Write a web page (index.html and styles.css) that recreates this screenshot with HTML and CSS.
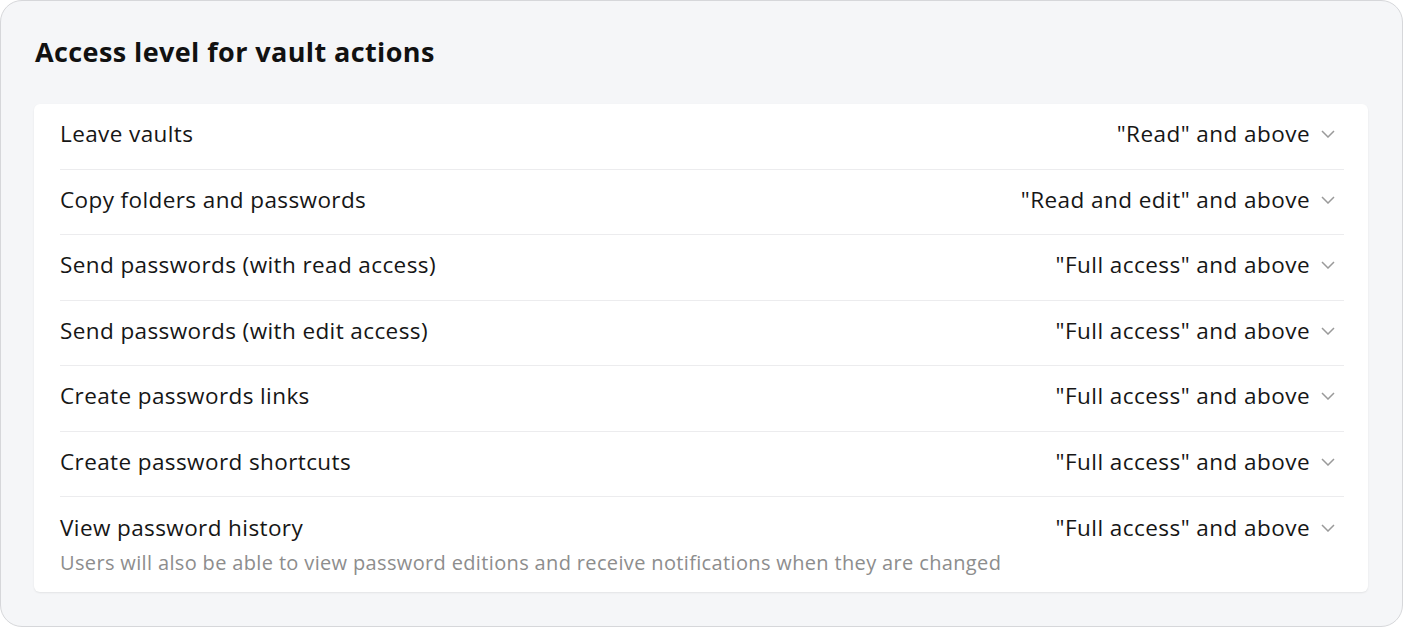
FILE: index.html
```html
<!DOCTYPE html>
<html>
<head>
<meta charset="utf-8">
<link rel="stylesheet" href="styles.css">
</head>
<body>
<div class="panel">
  <h2 class="title">Access level for vault actions</h2>
  <div class="card">
    <div class="row">
      <div class="label">Leave vaults</div>
      <div class="select">"Read" and above<svg class="chev" viewBox="0 0 14 8" width="14" height="8"><path d="M1 1l6 6 6-6" fill="none" stroke="#9a9a9a" stroke-width="1.5"/></svg></div>
    </div>
    <div class="row">
      <div class="label">Copy folders and passwords</div>
      <div class="select">"Read and edit" and above<svg class="chev" viewBox="0 0 14 8" width="14" height="8"><path d="M1 1l6 6 6-6" fill="none" stroke="#9a9a9a" stroke-width="1.5"/></svg></div>
    </div>
    <div class="row">
      <div class="label">Send passwords (with read access)</div>
      <div class="select">"Full access" and above<svg class="chev" viewBox="0 0 14 8" width="14" height="8"><path d="M1 1l6 6 6-6" fill="none" stroke="#9a9a9a" stroke-width="1.5"/></svg></div>
    </div>
    <div class="row">
      <div class="label">Send passwords (with edit access)</div>
      <div class="select">"Full access" and above<svg class="chev" viewBox="0 0 14 8" width="14" height="8"><path d="M1 1l6 6 6-6" fill="none" stroke="#9a9a9a" stroke-width="1.5"/></svg></div>
    </div>
    <div class="row">
      <div class="label">Create passwords links</div>
      <div class="select">"Full access" and above<svg class="chev" viewBox="0 0 14 8" width="14" height="8"><path d="M1 1l6 6 6-6" fill="none" stroke="#9a9a9a" stroke-width="1.5"/></svg></div>
    </div>
    <div class="row">
      <div class="label">Create password shortcuts</div>
      <div class="select">"Full access" and above<svg class="chev" viewBox="0 0 14 8" width="14" height="8"><path d="M1 1l6 6 6-6" fill="none" stroke="#9a9a9a" stroke-width="1.5"/></svg></div>
    </div>
    <div class="row row-last">
      <div class="info">
        <div class="label">View password history</div>
        <div class="hint">Users will also be able to view password editions and receive notifications when they are changed</div>
      </div>
      <div class="select">"Full access" and above<svg class="chev" viewBox="0 0 14 8" width="14" height="8"><path d="M1 1l6 6 6-6" fill="none" stroke="#9a9a9a" stroke-width="1.5"/></svg></div>
    </div>
  </div>
</div>
</body>
</html>
```

FILE: styles.css
```css
* { box-sizing: border-box; }
html, body { margin: 0; padding: 0; background: #ffffff; }
body { font-family: "Open Sans", "Noto Sans", sans-serif; color: #161616; }
.panel {
  width: 1403px;
  height: 627px;
  background: #f5f6f8;
  border: 1px solid #d6d7da;
  border-radius: 22px;
  padding: 30px 34px 34px 33px;
}
.title {
  margin: 0 0 31px 1px;
  font-size: 27px;
  line-height: 42px;
  font-weight: 700;
  letter-spacing: 0.4px;
  color: #111;
}
.card {
  background: #fff;
  border-radius: 6px;
  box-shadow: 0 1px 2px rgba(0,0,0,0.08);
  padding: 0 24px 0 26px;
}
.row {
  display: flex;
  justify-content: space-between;
  align-items: center;
  height: 65.5px;
  padding-bottom: 4px;
  border-bottom: 1px solid #ececee;
}
.row-last {
  border-bottom: none;
  align-items: flex-start;
  height: auto;
  padding: 16px 0 15px;
}
.label {
  font-size: 22.5px;
  line-height: 30px;
  letter-spacing: 0.4px;
}
.hint {
  font-size: 20px;
  line-height: 28px;
  letter-spacing: 0.35px;
  color: #8d8d8d;
  margin-top: 6px;
}
.select {
  display: flex;
  align-items: center;
  font-size: 22.5px;
  line-height: 30px;
  letter-spacing: 0.45px;
  white-space: nowrap;
}
.chev { margin-left: 11px; margin-right: 9px; }
```
